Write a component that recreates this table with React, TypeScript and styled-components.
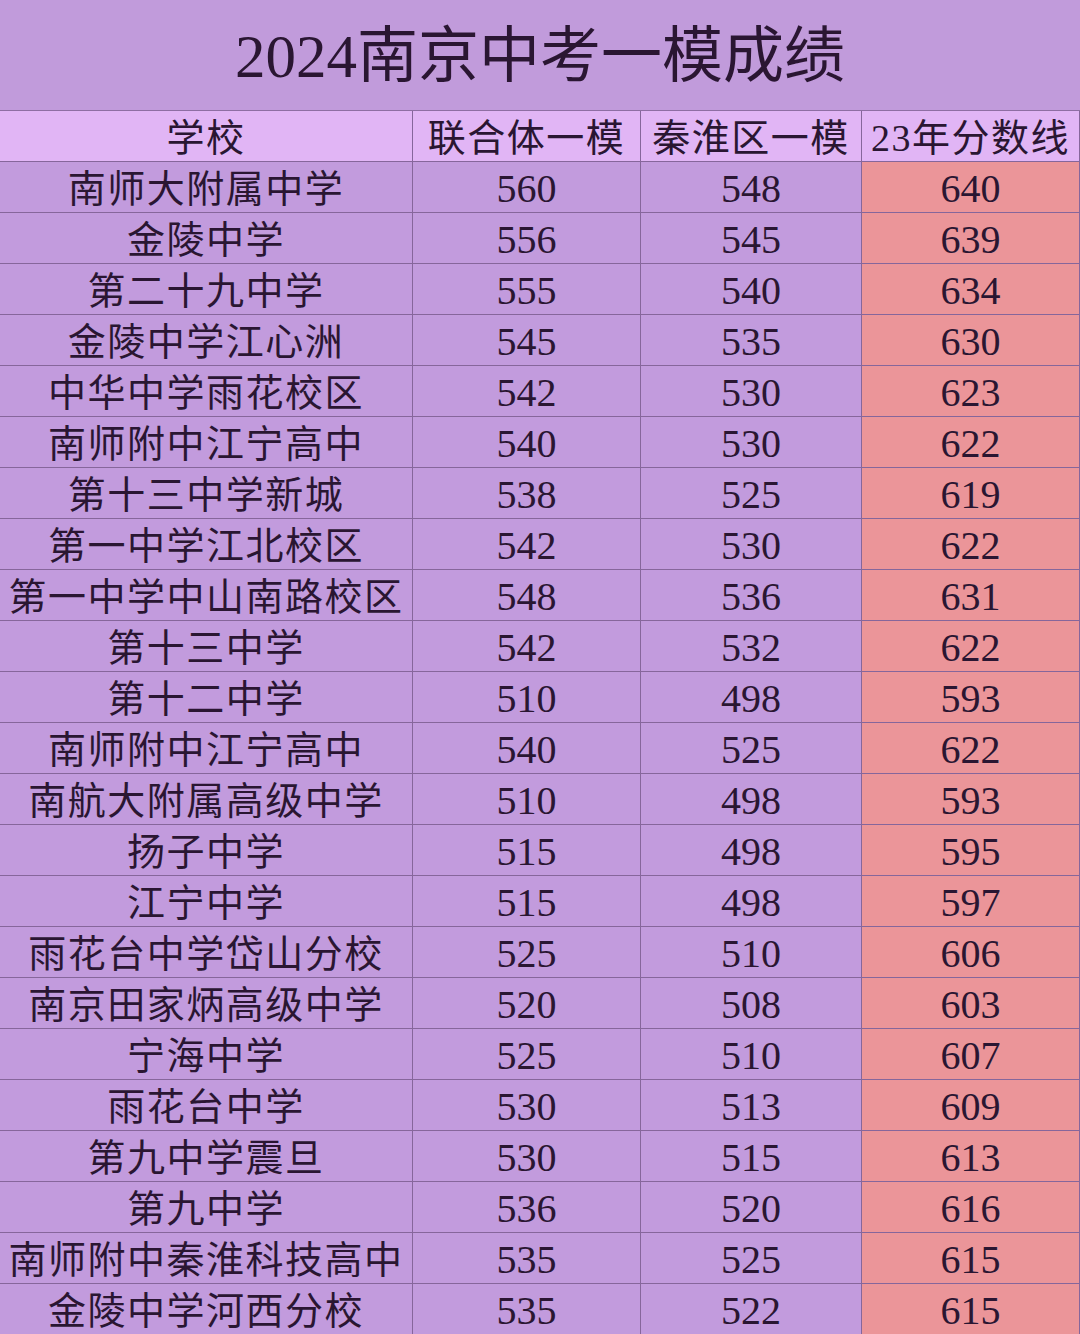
import React from 'react';
import styled, { createGlobalStyle } from 'styled-components';

const GlobalStyle = createGlobalStyle`
  html, body {
    margin: 0;
    padding: 0;
    background: #c19bdb;
  }
  body {
    font-family: "Liberation Serif", "Noto Sans CJK SC", serif;
    color: #2a1632;
  }
`;

type Row = [string, number, number, number];

const rows: Row[] = [
  ['南师大附属中学', 560, 548, 640],
  ['金陵中学', 556, 545, 639],
  ['第二十九中学', 555, 540, 634],
  ['金陵中学江心洲', 545, 535, 630],
  ['中华中学雨花校区', 542, 530, 623],
  ['南师附中江宁高中', 540, 530, 622],
  ['第十三中学新城', 538, 525, 619],
  ['第一中学江北校区', 542, 530, 622],
  ['第一中学中山南路校区', 548, 536, 631],
  ['第十三中学', 542, 532, 622],
  ['第十二中学', 510, 498, 593],
  ['南师附中江宁高中', 540, 525, 622],
  ['南航大附属高级中学', 510, 498, 593],
  ['扬子中学', 515, 498, 595],
  ['江宁中学', 515, 498, 597],
  ['雨花台中学岱山分校', 525, 510, 606],
  ['南京田家炳高级中学', 520, 508, 603],
  ['宁海中学', 525, 510, 607],
  ['雨花台中学', 530, 513, 609],
  ['第九中学震旦', 530, 515, 613],
  ['第九中学', 536, 520, 616],
  ['南师附中秦淮科技高中', 535, 525, 615],
  ['金陵中学河西分校', 535, 522, 615],
];

const Page = styled.div`
  width: 1080px;
  height: 1334px;
  overflow: hidden;
  background: #c19bdb;
`;

const Title = styled.h1`
  margin: 0;
  height: 110px;
  display: flex;
  align-items: center;
  justify-content: center;
  font-size: 61px;
  font-weight: 400;
  letter-spacing: 0;
  padding-bottom: 10px;
  box-sizing: border-box;
`;

const Grid = styled.div`
  display: grid;
  grid-template-columns: 413px 228px 221px 1fr;
  grid-auto-rows: 51px;
  border-top: 1px solid #8e6ea3;
`;

const Cell = styled.div<{ $head?: boolean; $line?: boolean }>`
  display: flex;
  align-items: center;
  justify-content: center;
  box-sizing: border-box;
  border-right: 1px solid #86669b;
  border-bottom: 1px solid #86669b;
  background: ${(p) => (p.$head ? '#e1b5f5' : p.$line ? '#eb9599' : '#c29bdd')};
  font-size: 38px;
  letter-spacing: 1.5px;
  white-space: nowrap;
  line-height: 1;
  padding-top: 3px;
`;

const Num = styled(Cell)`
  font-size: 40px;
  letter-spacing: 0;
`;

export default function App() {
  return (
    <Page>
      <GlobalStyle />
      <Title>2024南京中考一模成绩</Title>
      <Grid>
        <Cell $head>学校</Cell>
        <Cell $head>联合体一模</Cell>
        <Cell $head>秦淮区一模</Cell>
        <Cell $head>23年分数线</Cell>
        {rows.map(([name, a, b, c], i) => (
          <React.Fragment key={i}>
            <Cell>{name}</Cell>
            <Num>{a}</Num>
            <Num>{b}</Num>
            <Num $line>{c}</Num>
          </React.Fragment>
        ))}
      </Grid>
    </Page>
  );
}
